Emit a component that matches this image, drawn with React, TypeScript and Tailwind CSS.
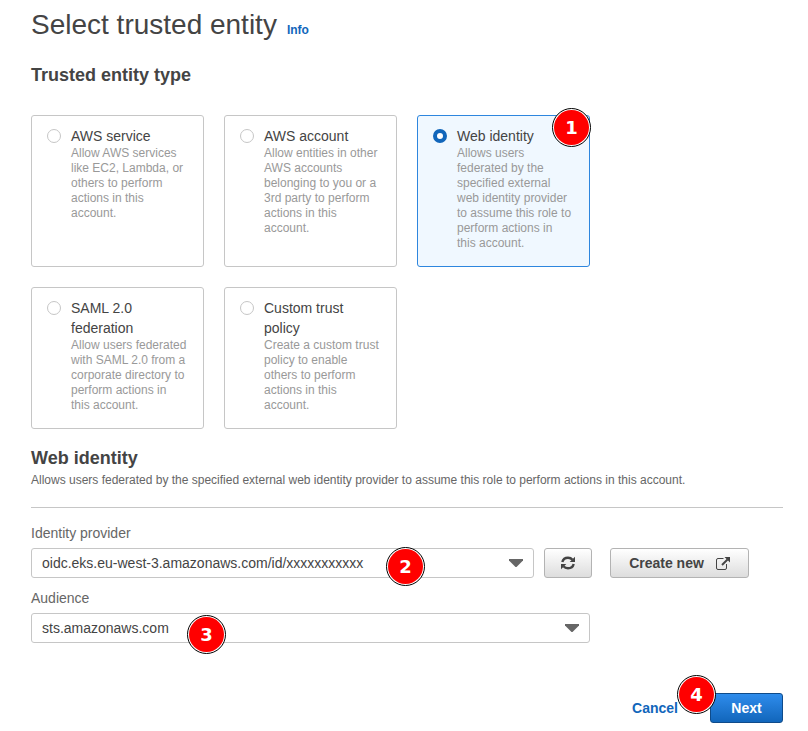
import React from "react";

type Entity = { id: string; title: string; text: string; step?: string };

const entities: Entity[] = [
  { id: "service", title: "AWS service", text: "Allow AWS services like EC2, Lambda, or others to perform actions in this account." },
  { id: "account", title: "AWS account", text: "Allow entities in other AWS accounts belonging to you or a 3rd party to perform actions in this account." },
  { id: "web", title: "Web identity", text: "Allows users federated by the specified external web identity provider to assume this role to perform actions in this account.", step: "1" },
  { id: "saml", title: "SAML 2.0 federation", text: "Allow users federated with SAML 2.0 from a corporate directory to perform actions in this account." },
  { id: "custom", title: "Custom trust policy", text: "Create a custom trust policy to enable others to perform actions in this account." },
];

function Badge({ n, className }: { n: string; className: string }) {
  return (
    <span
      className={`pointer-events-none absolute flex size-[39px] items-center justify-center rounded-full border border-black bg-white p-px ${className}`}
    >
      <span className="flex size-full items-center justify-center rounded-full bg-[#ff0000] font-['DejaVu_Sans',sans-serif] text-[18px] leading-5 font-bold text-white">
        {n}
      </span>
    </span>
  );
}

function Dropdown({ id, value }: { id: string; value: string }) {
  return (
    <>
      <select
        id={id}
        className="block h-[30px] w-full appearance-none rounded-[3px] border border-[#c6c6c6] bg-white px-[10px] text-[14px] leading-5 text-[#444444]"
      >
        <option>{value}</option>
      </select>
      <svg className="pointer-events-none absolute top-[11px] right-[11px]" width="14" height="8" viewBox="0 0 14 8" aria-hidden="true">
        <path d="M0 0h14v1.500L7.500 8h-1L0 1.500z" fill="#666666" />
      </svg>
    </>
  );
}

function RefreshIcon() {
  return (
    <svg width="14" height="14" viewBox="0 0 14 14" fill="none" stroke="#444444" strokeWidth="2.4" aria-hidden="true">
      <path d="M1.300 6C2 3.300 4.200 1.700 7 1.700c1.900 0 3.400.7 4.500 2M12.700 8C12 10.700 9.800 12.300 7 12.300c-1.900 0-3.400-.7-4.500-2" />
      <path d="M14 .8V6H8.700zM0 13.200V8h5.300z" fill="#444444" stroke="none" />
    </svg>
  );
}

function ExternalIcon() {
  return (
    <svg width="14" height="13" viewBox="0 0 14 13" fill="none" stroke="#444444" aria-hidden="true">
      <path d="M7.500 1.500H2A1.500 1.500 0 0 0 .5 3v8A1.500 1.500 0 0 0 2 12.500h7A1.500 1.500 0 0 0 10.500 11V7" />
      <path d="M6 8l5.500-5.500" strokeWidth="2" />
      <path d="M8.500 0H14v5.500z" fill="#444444" stroke="none" />
    </svg>
  );
}

const grayButton =
  "flex h-[30px] shrink-0 items-center justify-center gap-3 rounded-[3px] border border-[#b3b3b3] bg-linear-to-b from-white to-[#dddddd] text-[14px] leading-5 font-bold text-[#444444]";

export default function App() {
  const [selected, setSelected] = React.useState("web");

  return (
    <main className="bg-white pt-[7px] pr-[25px] pb-2 pl-[31px] font-['Liberation_Sans',Arial,sans-serif] text-[14px] leading-5 text-[#444444]">
      <header className="flex items-baseline gap-[10px]">
        <h1 className="text-[28px] leading-9">Select trusted entity</h1>
        <a href="#info" className="text-[12px] leading-4 font-bold text-[#1166bb]">Info</a>
      </header>

      <fieldset className="mt-5">
        <legend className="text-[18px] leading-6 font-bold">Trusted entity type</legend>
        <div className="mt-7 grid max-w-[559px] grid-cols-3 gap-5">
          {entities.map((e) => (
            <label
              key={e.id}
              htmlFor={e.id}
              className={`relative flex gap-[10px] rounded-[3px] border px-[15px] pt-[10px] pb-[15px] ${
                selected === e.id ? "border-[#2e86de] bg-[#f0f8ff]" : "border-[#c6c6c6] bg-white"
              }`}
            >
              <input
                id={e.id}
                type="radio"
                name="entity"
                checked={selected === e.id}
                onChange={() => setSelected(e.id)}
                className="mt-[3px] size-[14px] shrink-0 appearance-none rounded-full border border-[#c6c6c6] bg-white checked:border-4 checked:border-[#1166bb]"
              />
              <span className="min-w-0">
                <span className="block">{e.title}</span>
                <span className="block text-[12px] leading-[15px] text-[#999999]">{e.text}</span>
              </span>
              {e.step && <Badge n={e.step} className="-top-2 -right-[2px]" />}
            </label>
          ))}
        </div>
      </fieldset>

      <section className="mt-[17px]">
        <h2 className="text-[18px] leading-6 font-bold">Web identity</h2>
        <p className="mt-[2px] border-b border-[#c6c6c6] pb-[19px] text-[12px] leading-4 text-[#666666]">
          Allows users federated by the specified external web identity provider to assume this role to perform actions in this account.
        </p>

        <label htmlFor="provider" className="mt-[15px] block text-[#666666]">Identity provider</label>
        <div className="mt-[5px] flex">
          <div className="relative w-full max-w-[503px]">
            <Dropdown id="provider" value="oidc.eks.eu-west-3.amazonaws.com/id/xxxxxxxxxxx" />
            <Badge n="2" className="-top-px left-[355px]" />
          </div>
          <button type="button" aria-label="Refresh" className={`ml-[10px] w-12 ${grayButton}`}>
            <RefreshIcon />
          </button>
          <button type="button" className={`ml-[18px] w-[139px] ${grayButton}`}>
            Create new
            <ExternalIcon />
          </button>
        </div>

        <label htmlFor="audience" className="mt-[10px] block text-[#666666]">Audience</label>
        <div className="relative mt-[5px] max-w-[559px]">
          <Dropdown id="audience" value="sts.amazonaws.com" />
          <Badge n="3" className="top-[2px] left-[156px]" />
        </div>
      </section>

      <footer className="mt-[50px] flex items-center justify-end gap-8 font-bold">
        <a href="#cancel" className="text-[#1166bb]">Cancel</a>
        <div className="relative">
          <button
            type="button"
            className="block h-[30px] w-[73px] rounded-[3px] border border-[#0f4b8a] bg-linear-to-b from-[#2e8cec] to-[#1166bb] text-white"
          >
            Next
          </button>
          <Badge n="4" className="-top-[18px] -left-[33px]" />
        </div>
      </footer>
    </main>
  );
}
